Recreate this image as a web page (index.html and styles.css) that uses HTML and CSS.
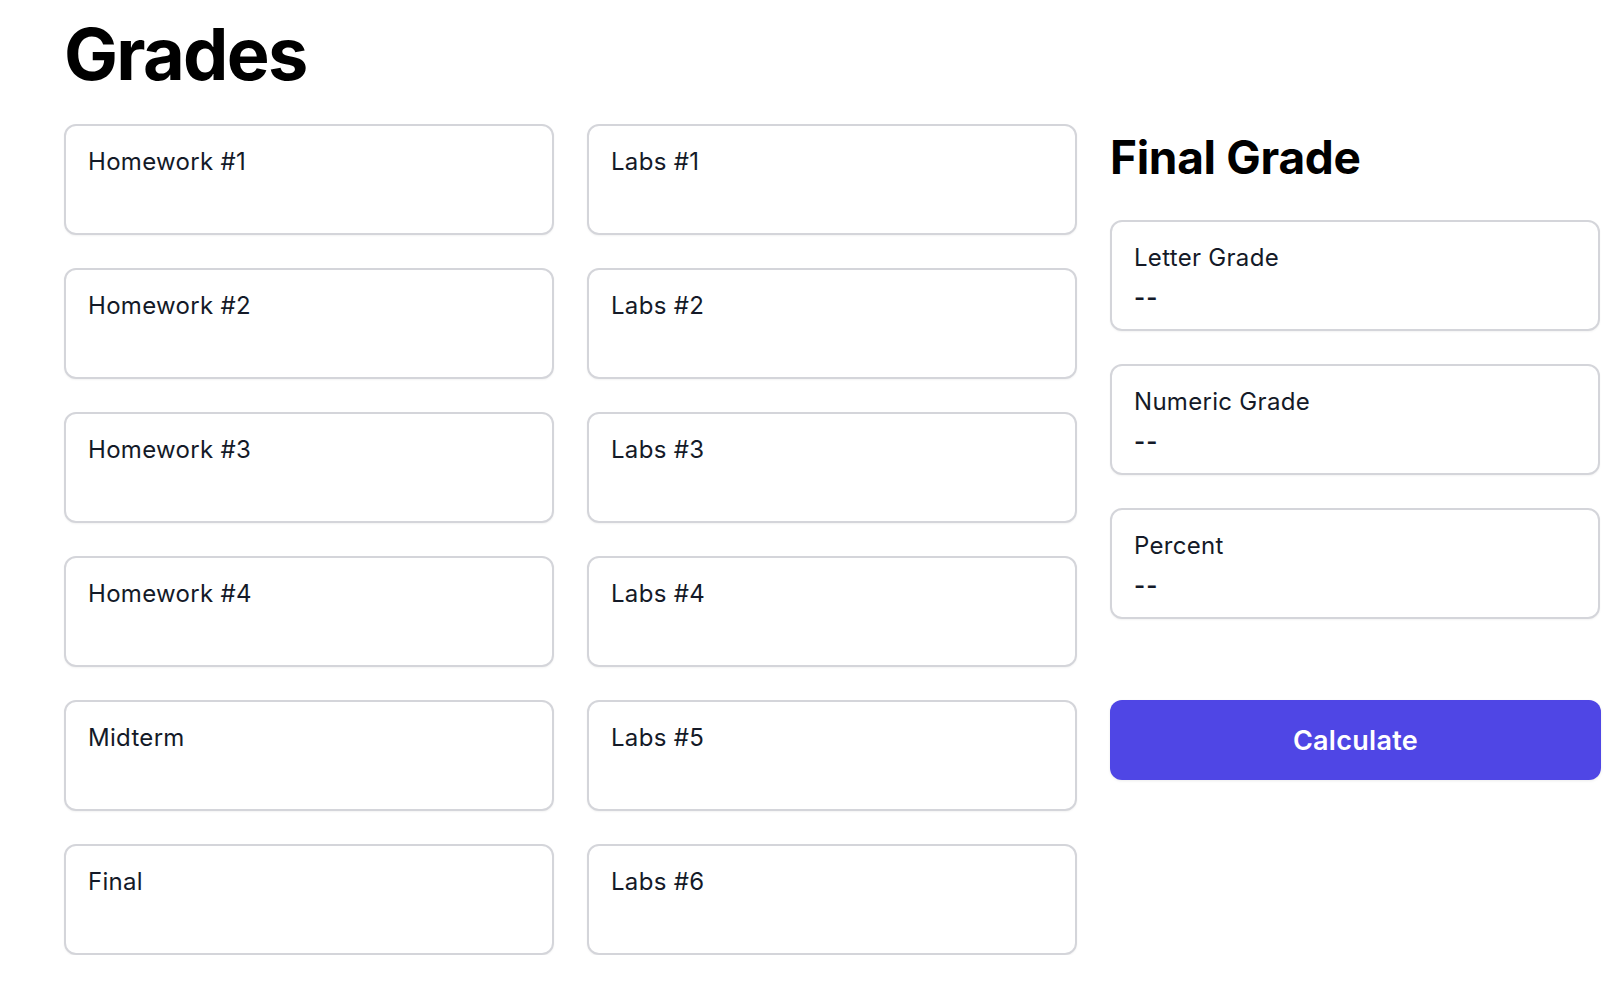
FILE: index.html
```html
<!DOCTYPE html>
<html lang="en">
<head>
<meta charset="utf-8">
<title>Grades</title>
<link rel="stylesheet" href="styles.css">
</head>
<body>
<main class="page">
  <h1 class="title">Grades</h1>
  <div class="layout">
    <section class="inputs">
      <label class="card"><span class="card-label">Homework #1</span><input class="card-input" type="text"></label>
      <label class="card"><span class="card-label">Labs #1</span><input class="card-input" type="text"></label>
      <label class="card"><span class="card-label">Homework #2</span><input class="card-input" type="text"></label>
      <label class="card"><span class="card-label">Labs #2</span><input class="card-input" type="text"></label>
      <label class="card"><span class="card-label">Homework #3</span><input class="card-input" type="text"></label>
      <label class="card"><span class="card-label">Labs #3</span><input class="card-input" type="text"></label>
      <label class="card"><span class="card-label">Homework #4</span><input class="card-input" type="text"></label>
      <label class="card"><span class="card-label">Labs #4</span><input class="card-input" type="text"></label>
      <label class="card"><span class="card-label">Midterm</span><input class="card-input" type="text"></label>
      <label class="card"><span class="card-label">Labs #5</span><input class="card-input" type="text"></label>
      <label class="card"><span class="card-label">Final</span><input class="card-input" type="text"></label>
      <label class="card"><span class="card-label">Labs #6</span><input class="card-input" type="text"></label>
    </section>
    <section class="results">
      <h2 class="subtitle">Final Grade</h2>
      <div class="result-list">
        <div class="card"><span class="card-label">Letter Grade</span><span class="card-value">--</span></div>
        <div class="card"><span class="card-label">Numeric Grade</span><span class="card-value">--</span></div>
        <div class="card"><span class="card-label">Percent</span><span class="card-value">--</span></div>
      </div>
      <button class="calc-btn" type="button">Calculate</button>
    </section>
  </div>
</main>
</body>
</html>
```

FILE: styles.css
```css
* { box-sizing: border-box; }

html, body {
  margin: 0;
  padding: 0;
  background: #ffffff;
}

body {
  font-family: Inter, "Liberation Sans", Arial, sans-serif;
  color: #111827;
}

.page {
  padding: 0 0 0 64px;
}

.title {
  margin: 18px 0 34px 0;
  font-size: 72px;
  line-height: 72px;
  font-weight: 700;
  color: #000000;
  letter-spacing: -1.7px;
}

.layout {
  display: flex;
  align-items: flex-start;
}

.inputs {
  display: grid;
  grid-template-columns: 490px 490px;
  column-gap: 33px;
  row-gap: 33px;
}

.card {
  display: flex;
  flex-direction: column;
  width: 490px;
  height: 111px;
  padding: 18px 22px 14px 22px;
  border: 2px solid #d4d5da;
  border-radius: 12px;
  background: #ffffff;
  box-shadow: 0 1px 2px rgba(0, 0, 0, 0.05);
}

.card-label {
  font-size: 24px;
  line-height: 36px;
  font-weight: 400;
  color: #141a28;
  letter-spacing: 0.3px;
}

.card-input {
  border: none;
  outline: none;
  background: transparent;
  padding: 0;
  margin: 4px 0 0 0;
  font-family: inherit;
  font-size: 24px;
  line-height: 36px;
  height: 36px;
  color: #141a28;
  width: 100%;
}

.card-value {
  margin-top: 4px;
  font-size: 24px;
  line-height: 36px;
  font-weight: 600;
  color: #141a28;
  letter-spacing: 1px;
}

.results {
  margin-left: 33px;
  width: 491px;
  display: flex;
  flex-direction: column;
}

.subtitle {
  margin: 5px 0 35px 0;
  font-size: 46px;
  line-height: 56px;
  font-weight: 700;
  color: #000000;
  letter-spacing: -0.3px;
}

.result-list {
  display: flex;
  flex-direction: column;
  gap: 33px;
}

.calc-btn {
  margin-top: 81px;
  width: 491px;
  height: 80px;
  border: none;
  border-radius: 12px;
  background: #4f46e5;
  color: #ffffff;
  font-family: inherit;
  font-size: 27px;
  font-weight: 600;
  letter-spacing: 0.3px;
  box-shadow: 0 1px 3px rgba(0, 0, 0, 0.08);
  cursor: pointer;
}
```
